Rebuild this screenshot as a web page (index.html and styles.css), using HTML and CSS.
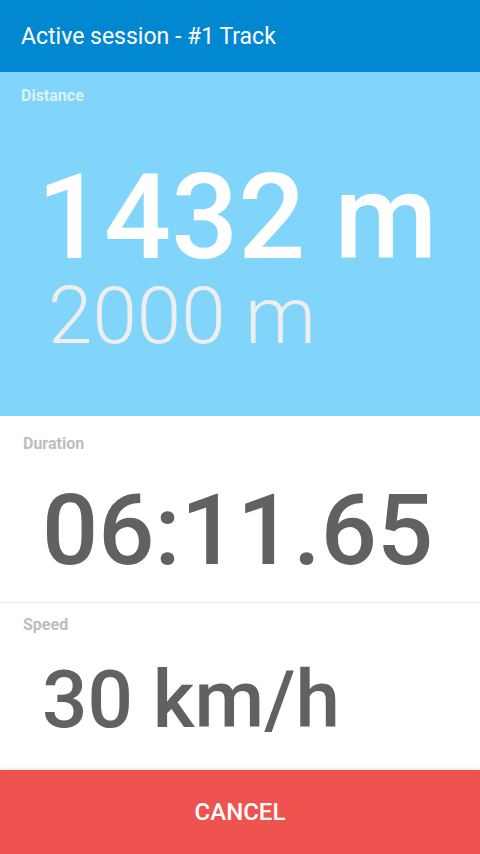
FILE: index.html
```html
<!DOCTYPE html>
<html>
<head>
<meta charset="utf-8">
<link rel="stylesheet" href="styles.css">
</head>
<body>
<div class="screen">
  <header class="appbar">Active session - #1 Track</header>
  <section class="distance">
    <div class="label label-light">Distance</div>
    <div class="big-value">1432 m</div>
    <div class="target-value">2000 m</div>
  </section>
  <section class="stat duration">
    <div class="label label-gray">Duration</div>
    <div class="stat-value duration-value">06:11.65</div>
  </section>
  <section class="stat speed">
    <div class="label label-gray">Speed</div>
    <div class="stat-value speed-value">30 km/h</div>
  </section>
  <button class="cancel">CANCEL</button>
</div>
</body>
</html>
```
FILE: styles.css
```css
html, body {
  margin: 0;
  padding: 0;
}
body {
  font-family: Roboto, "Noto Sans", sans-serif;
  background: #ffffff;
}
.screen {
  width: 480px;
  height: 854px;
  display: flex;
  flex-direction: column;
  overflow: hidden;
}
.appbar {
  height: 72px;
  flex: none;
  background: #0288D1;
  color: #ffffff;
  font-size: 23px;
  font-weight: 400;
  display: flex;
  align-items: center;
  padding-left: 21px;
  box-sizing: border-box;
}
.label {
  font-size: 16px;
  line-height: 20px;
  font-weight: 700;
}
.label-light {
  color: rgba(255, 255, 255, 0.72);
}
.label-gray {
  color: #BDBDBD;
}
.distance {
  flex: none;
  height: 344px;
  box-sizing: border-box;
  background: #81D4FA;
  padding: 14px 21px 0;
}
.big-value {
  font-size: 118px;
  line-height: 100px;
  font-weight: 500;
  color: #ffffff;
  margin-top: 62px;
  padding-left: 16px;
}
.target-value {
  font-size: 80px;
  line-height: 80px;
  font-weight: 300;
  color: #EEEEEE;
  margin-top: 8px;
  padding-left: 27px;
}
.stat {
  padding: 0 23px;
  box-sizing: border-box;
}
.duration {
  flex: none;
  height: 187px;
  padding-top: 18px;
  border-bottom: 1px solid #EEEEEE;
}
.speed {
  flex: 1;
  padding-top: 12px;
}
.stat-value {
  line-height: 1;
  font-weight: 500;
  color: #616161;
}
.duration-value {
  font-size: 99px;
  margin-top: 27px;
  padding-left: 19px;
}
.speed-value {
  font-size: 80px;
  margin-top: 25px;
  padding-left: 19px;
}
.cancel {
  flex: none;
  height: 84px;
  border: none;
  margin: 0;
  background: #EF5350;
  color: #ffffff;
  font-family: Roboto, "Noto Sans", sans-serif;
  font-size: 24px;
  font-weight: 500;
  box-shadow: 0 -1px 3px rgba(0, 0, 0, 0.12);
  position: relative;
}
```
